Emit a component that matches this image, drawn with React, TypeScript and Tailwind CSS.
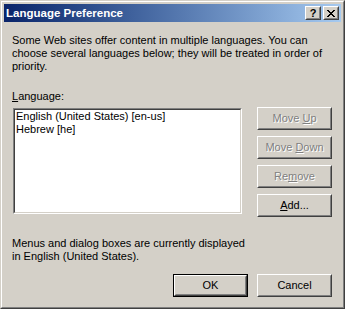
import React from 'react'

const FONT = { fontFamily: '"Liberation Sans", Arial, sans-serif' }

function Btn({ children, disabled, isDefault, className = '' }: { children: React.ReactNode; disabled?: boolean; isDefault?: boolean; className?: string }) {
  const bevel = (
    <div className="h-full w-full border border-t-white border-l-white border-b-[#404040] border-r-[#404040]">
      <div className="h-full w-full border border-t-[#d4d0c8] border-l-[#d4d0c8] border-b-[#808080] border-r-[#808080] flex items-center justify-center">
        <span className={disabled ? 'text-[#808080] [text-shadow:1px_1px_0_#ffffff]' : 'text-black'}>{children}</span>
      </div>
    </div>
  )
  return (
    <div className={`w-[75px] h-[23px] bg-[#d4d0c8] ${isDefault ? 'border border-black' : ''} ${className}`}>
      {bevel}
    </div>
  )
}

function CaptionBtn({ children }: { children: React.ReactNode }) {
  return (
    <div className="w-[16px] h-[14px] bg-[#d4d0c8] border border-t-white border-l-white border-b-[#404040] border-r-[#404040]">
      <div className="h-full w-full border border-t-[#d4d0c8] border-l-[#d4d0c8] border-b-[#808080] border-r-[#808080] flex items-center justify-center">
        {children}
      </div>
    </div>
  )
}

export default function App() {
  return (
    <div className="w-[345px] h-[309px] bg-[#d4d0c8] text-[11px] leading-[13px] text-black" style={FONT}>
      {/* window frame */}
      <div className="h-full w-full border border-t-[#d4d0c8] border-l-[#d4d0c8] border-b-[#404040] border-r-[#404040]">
        <div className="h-full w-full border border-t-white border-l-white border-b-[#808080] border-r-[#808080] p-[2px] flex flex-col">

          {/* title bar */}
          <div className="h-[18px] flex items-center justify-between pl-[2px] pr-[2px] bg-gradient-to-r from-[#0a246a] to-[#a6caf0]">
            <span className="text-white font-bold text-[11.5px]">Language Preference</span>
            <div className="flex gap-[2px]">
              <CaptionBtn>
                <span className="font-bold text-[11px] leading-none text-black">?</span>
              </CaptionBtn>
              <CaptionBtn>
                <svg width="8" height="7" viewBox="0 0 8 7" shapeRendering="crispEdges">
                  <path d="M0 0h2v1h-2zM6 0h2v1h-2zM1 1h2v1h-2zM5 1h2v1h-2zM2 2h4v1h-4zM3 3h2v1h-2zM2 4h4v1h-4zM1 5h2v1h-2zM5 5h2v1h-2zM0 6h2v1h-2zM6 6h2v1h-2z" fill="#000" />
                </svg>
              </CaptionBtn>
            </div>
          </div>

          {/* body */}
          <div className="flex-1 pl-[8px] pr-[9px] pt-[12px] flex flex-col">
            <p>
              Some Web sites offer content in multiple languages. You can<br />
              choose several languages below; they will be treated in order of<br />
              priority.
            </p>

            <div className="mt-[17px]"><u className="underline-offset-[1px]">L</u>anguage:</div>

            <div className="flex mt-[5px]">
              <div className="ml-[1px] w-[229px] h-[106px] border border-t-[#808080] border-l-[#808080] border-b-white border-r-white">
                <div className="h-full w-full bg-white border border-t-[#404040] border-l-[#404040] border-b-[#d4d0c8] border-r-[#d4d0c8] px-[1px]">
                  <div>English (United States) [en-us]</div>
                  <div>Hebrew [he]</div>
                </div>
              </div>
              <div className="ml-auto -mt-[1px] flex flex-col gap-[6px]">
                <Btn disabled>Move <u>U</u>p</Btn>
                <Btn disabled>Move <u>D</u>own</Btn>
                <Btn disabled>Re<u>m</u>ove</Btn>
                <Btn><u>A</u>dd...</Btn>
              </div>
            </div>

            <p className="mt-[20px]">
              Menus and dialog boxes are currently displayed<br />
              in English (United States).
            </p>

            <div className="flex justify-end gap-[9px] mt-[11px]">
              <Btn isDefault>OK</Btn>
              <Btn>Cancel</Btn>
            </div>
          </div>
        </div>
      </div>
    </div>
  )
}
